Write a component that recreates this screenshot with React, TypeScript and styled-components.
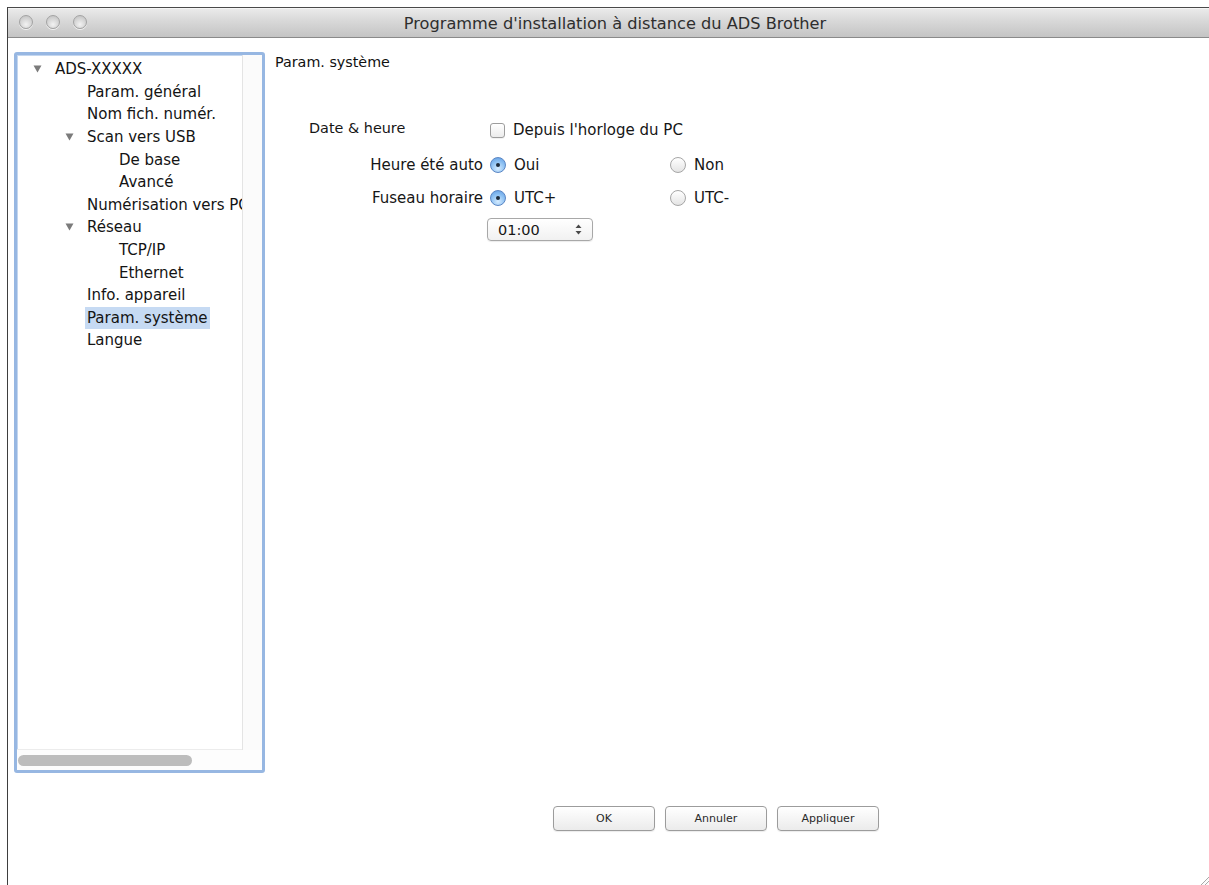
import React from 'react';
import styled, { createGlobalStyle } from 'styled-components';

const GlobalStyle = createGlobalStyle`
  html, body {
    margin: 0;
    padding: 0;
    background: #ffffff;
    overflow: hidden;
  }
  body {
    font-family: "DejaVu Sans", "Liberation Sans", sans-serif;
    color: #1c1c1c;
  }
`;

type TreeNode = {
    label: string;
    level: number;
    expanded?: boolean;
    selected?: boolean;
};

const treeItems: TreeNode[] = [
    { label: 'ADS-XXXXX', level: 0, expanded: true },
    { label: 'Param. général', level: 1 },
    { label: 'Nom fich. numér.', level: 1 },
    { label: 'Scan vers USB', level: 1, expanded: true },
    { label: 'De base', level: 2 },
    { label: 'Avancé', level: 2 },
    { label: 'Numérisation vers PC', level: 1 },
    { label: 'Réseau', level: 1, expanded: true },
    { label: 'TCP/IP', level: 2 },
    { label: 'Ethernet', level: 2 },
    { label: 'Info. appareil', level: 1 },
    { label: 'Param. système', level: 1, selected: true },
    { label: 'Langue', level: 1 },
];

const DisclosureIcon: React.FC = () => (
    <svg width="9" height="8" viewBox="0 0 9 8">
        <path d="M0.5 0.5 L8.5 0.5 L4.5 7.5 Z" fill="#7b7b7b" />
    </svg>
);

const StepperIcon: React.FC = () => (
    <svg width="7" height="11" viewBox="0 0 7 11">
        <path d="M3.5 0.5 L6.5 4 L0.5 4 Z" fill="#4a4a4a" />
        <path d="M3.5 10.5 L6.5 7 L0.5 7 Z" fill="#4a4a4a" />
    </svg>
);

const ResizeGrip: React.FC = () => (
    <svg width="17" height="17" viewBox="0 0 17 17">
        <path d="M16 4 L4 16 M16 8 L8 16 M16 12 L12 16" stroke="#a9a9a9" strokeWidth="1" />
        <path d="M16.5 5 L5 16.5 M16.5 9 L9 16.5 M16.5 13 L13 16.5" stroke="#f4f4f4" strokeWidth="1" />
    </svg>
);

const App: React.FC = () => {
    return (
        <>
            <GlobalStyle />
            <Screen>
                <Window>
                    <TitleBar>
                        <Lights>
                            <Light />
                            <Light />
                            <Light />
                        </Lights>
                        <Title>Programme d'installation à distance du ADS Brother</Title>
                    </TitleBar>

                    <Body>
                        <Main>
                            <Sidebar>
                                <SidebarInner>
                                    <TreeArea>
                                        <TreeList>
                                            {treeItems.map((item) => (
                                                <TreeRow key={item.label} $level={item.level}>
                                                    <ToggleSlot>{item.expanded && <DisclosureIcon />}</ToggleSlot>
                                                    <TreeLabel $selected={item.selected}>{item.label}</TreeLabel>
                                                </TreeRow>
                                            ))}
                                        </TreeList>
                                        <VScrollTrack />
                                    </TreeArea>
                                    <HScrollTrack>
                                        <HThumb />
                                    </HScrollTrack>
                                </SidebarInner>
                            </Sidebar>

                            <Panel>
                                <PanelTitle>Param. système</PanelTitle>
                                <Form>
                                    <GroupLabel>Date &amp; heure</GroupLabel>
                                    <Choice>
                                        <Checkbox />
                                        <span>Depuis l'horloge du PC</span>
                                    </Choice>
                                    <span />

                                    <FieldLabel>Heure été auto</FieldLabel>
                                    <Choice>
                                        <Radio $checked />
                                        <span>Oui</span>
                                    </Choice>
                                    <Choice>
                                        <Radio />
                                        <span>Non</span>
                                    </Choice>

                                    <FieldLabel>Fuseau horaire</FieldLabel>
                                    <Choice>
                                        <Radio $checked />
                                        <span>UTC+</span>
                                    </Choice>
                                    <Choice>
                                        <Radio />
                                        <span>UTC-</span>
                                    </Choice>

                                    <span />
                                    <Select>
                                        <span>01:00</span>
                                        <StepperIcon />
                                    </Select>
                                </Form>
                            </Panel>
                        </Main>

                        <Footer>
                            <Button>OK</Button>
                            <Button>Annuler</Button>
                            <Button>Appliquer</Button>
                        </Footer>
                        <GripCorner>
                            <ResizeGrip />
                        </GripCorner>
                    </Body>
                </Window>
            </Screen>
        </>
    );
};

export default App;

const Screen = styled.div`
  width: 1209px;
  height: 885px;
  padding: 7px 0 0 7px;
  box-sizing: border-box;
  overflow: hidden;
`;

const Window = styled.div`
  width: 1210px;
  height: 878px;
  flex: none;
  display: flex;
  flex-direction: column;
  border-left: 1px solid #3e3e3e;
  border-top: 1px solid #4a4a4a;
  background: #ffffff;
`;

const TitleBar = styled.div`
  height: 29px;
  flex: none;
  position: relative;
  display: flex;
  align-items: center;
  justify-content: center;
  background: linear-gradient(#ebebeb, #d8d8d8 45%, #c4c4c4);
  border-bottom: 1px solid #8a8a8a;
  box-shadow: inset 0 1px 0 #f5f5f5;
`;

const Lights = styled.div`
  position: absolute;
  left: 11px;
  top: 7px;
  display: flex;
  gap: 13px;
`;

const Light = styled.span`
  width: 14px;
  height: 14px;
  border-radius: 50%;
  box-sizing: border-box;
  border: 1px solid #a3a3a3;
  background: radial-gradient(circle at 50% 70%, #f2f2f2, #d2d2d2 60%, #bdbdbd);
  box-shadow: 0 1px 0 rgba(255, 255, 255, 0.7);
`;

const Title = styled.div`
  font-size: 16.2px;
  color: #2e2e2e;
  padding: 2px 0 0 4px;
`;

const Body = styled.div`
  flex: 1;
  position: relative;
  display: flex;
  flex-direction: column;
`;

const Main = styled.div`
  display: flex;
  padding: 14px 0 0 6px;
`;

const Sidebar = styled.div`
  width: 251px;
  height: 721px;
  box-sizing: border-box;
  border: 3px solid #97b7e2;
  border-radius: 3px;
  box-shadow: inset 0 0 0 1px #c3d6ef;
  background: #ffffff;
  display: flex;
`;

const SidebarInner = styled.div`
  flex: 1;
  display: flex;
  flex-direction: column;
  overflow: hidden;
`;

const TreeArea = styled.div`
  flex: 1;
  display: flex;
  min-height: 0;
`;

const TreeList = styled.div`
  flex: 1;
  min-width: 0;
  padding-top: 3px;
  overflow: hidden;
  border-bottom: 1px solid #ececec;
`;

const TreeRow = styled.div<{ $level: number }>`
  height: 22.6px;
  display: flex;
  align-items: stretch;
  padding-left: ${(p) => 16 + p.$level * 32}px;
  font-size: 15px;
  white-space: nowrap;
  color: #141414;
`;

const ToggleSlot = styled.span`
  width: 22px;
  flex: none;
  display: flex;
  align-items: center;
  padding-bottom: 1px;
`;

const TreeLabel = styled.span<{ $selected?: boolean }>`
  display: flex;
  align-items: center;
  padding: 0 2px;
  margin-left: -2px;
  background: ${(p) => (p.$selected ? '#c6daf3' : 'transparent')};
`;

const VScrollTrack = styled.div`
  width: 19px;
  flex: none;
  background: #fbfbfb;
  border-left: 1px solid #e4e4e4;
`;

const HScrollTrack = styled.div`
  height: 20px;
  flex: none;
  display: flex;
  align-items: center;
  padding: 0 0 0 1px;
  background: #fdfdfd;
`;

const HThumb = styled.div`
  width: 174px;
  height: 11px;
  border-radius: 6px;
  background: #bdbdbd;
`;

const Panel = styled.div`
  padding: 2px 0 0 10px;
  flex: 1;
`;

const PanelTitle = styled.div`
  font-size: 14.3px;
  color: #111111;
`;

const Form = styled.div`
  margin: 47px 0 0 34px;
  display: grid;
  grid-template-columns: 174px 173px auto;
  column-gap: 7px;
  row-gap: 11px;
  align-items: center;
  font-size: 15px;
  color: #161616;
`;

const GroupLabel = styled.div`
  margin-bottom: 4px;
  height: 22px;
  display: flex;
  align-items: center;
  font-size: 14.4px;
  white-space: nowrap;
`;

const FieldLabel = styled.div`
  height: 22px;
  display: flex;
  align-items: center;
  justify-content: flex-end;
  white-space: nowrap;
`;

const Choice = styled.label`
  display: flex;
  align-items: center;
  gap: 8px;
  height: 22px;
  white-space: nowrap;
`;

const Checkbox = styled.span`
  width: 15px;
  height: 15px;
  flex: none;
  box-sizing: border-box;
  border: 1px solid #9d9d9d;
  border-radius: 3px;
  background: linear-gradient(#ffffff, #ececec);
  box-shadow: 0 1px 0 rgba(0, 0, 0, 0.05);
`;

const Radio = styled.span<{ $checked?: boolean }>`
  width: 16px;
  height: 16px;
  flex: none;
  box-sizing: border-box;
  border-radius: 50%;
  display: flex;
  align-items: center;
  justify-content: center;
  border: 1px solid ${(p) => (p.$checked ? '#5a86c4' : '#a6a6a6')};
  background: ${(p) =>
        p.$checked
            ? 'radial-gradient(circle at 50% 75%, #d6ecff, #8cc0f2 55%, #5d9ae2)'
            : 'linear-gradient(#ffffff, #e4e4e4)'};

  &::after {
    content: '';
    width: 4px;
    height: 4px;
    border-radius: 50%;
    background: #1c2a3a;
    display: ${(p) => (p.$checked ? 'block' : 'none')};
  }
`;

const Select = styled.div`
  width: 106px;
  height: 23px;
  box-sizing: border-box;
  margin-left: -3px;
  margin-top: -2px;
  border: 1px solid #a8a8a8;
  border-radius: 4px;
  background: linear-gradient(#ffffff, #f1f1f1);
  box-shadow: 0 1px 1px rgba(0, 0, 0, 0.08);
  display: flex;
  align-items: center;
  justify-content: space-between;
  padding: 0 10px 0 10px;
  font-size: 14.5px;
`;

const Footer = styled.div`
  display: flex;
  gap: 10px;
  padding: 33px 0 0 545px;
`;

const Button = styled.button`
  width: 102px;
  height: 25px;
  border: 1px solid #9c9c9c;
  border-radius: 4px;
  background: linear-gradient(#ffffff, #f3f3f3 60%, #ebebeb);
  box-shadow: 0 1px 1px rgba(0, 0, 0, 0.08);
  font-family: "DejaVu Sans", "Liberation Sans", sans-serif;
  font-size: 11px;
  color: #2a2a2a;
  padding: 0;
`;

const GripCorner = styled.div`
  position: absolute;
  right: 4px;
  bottom: 0;
  width: 17px;
  height: 17px;
`;
